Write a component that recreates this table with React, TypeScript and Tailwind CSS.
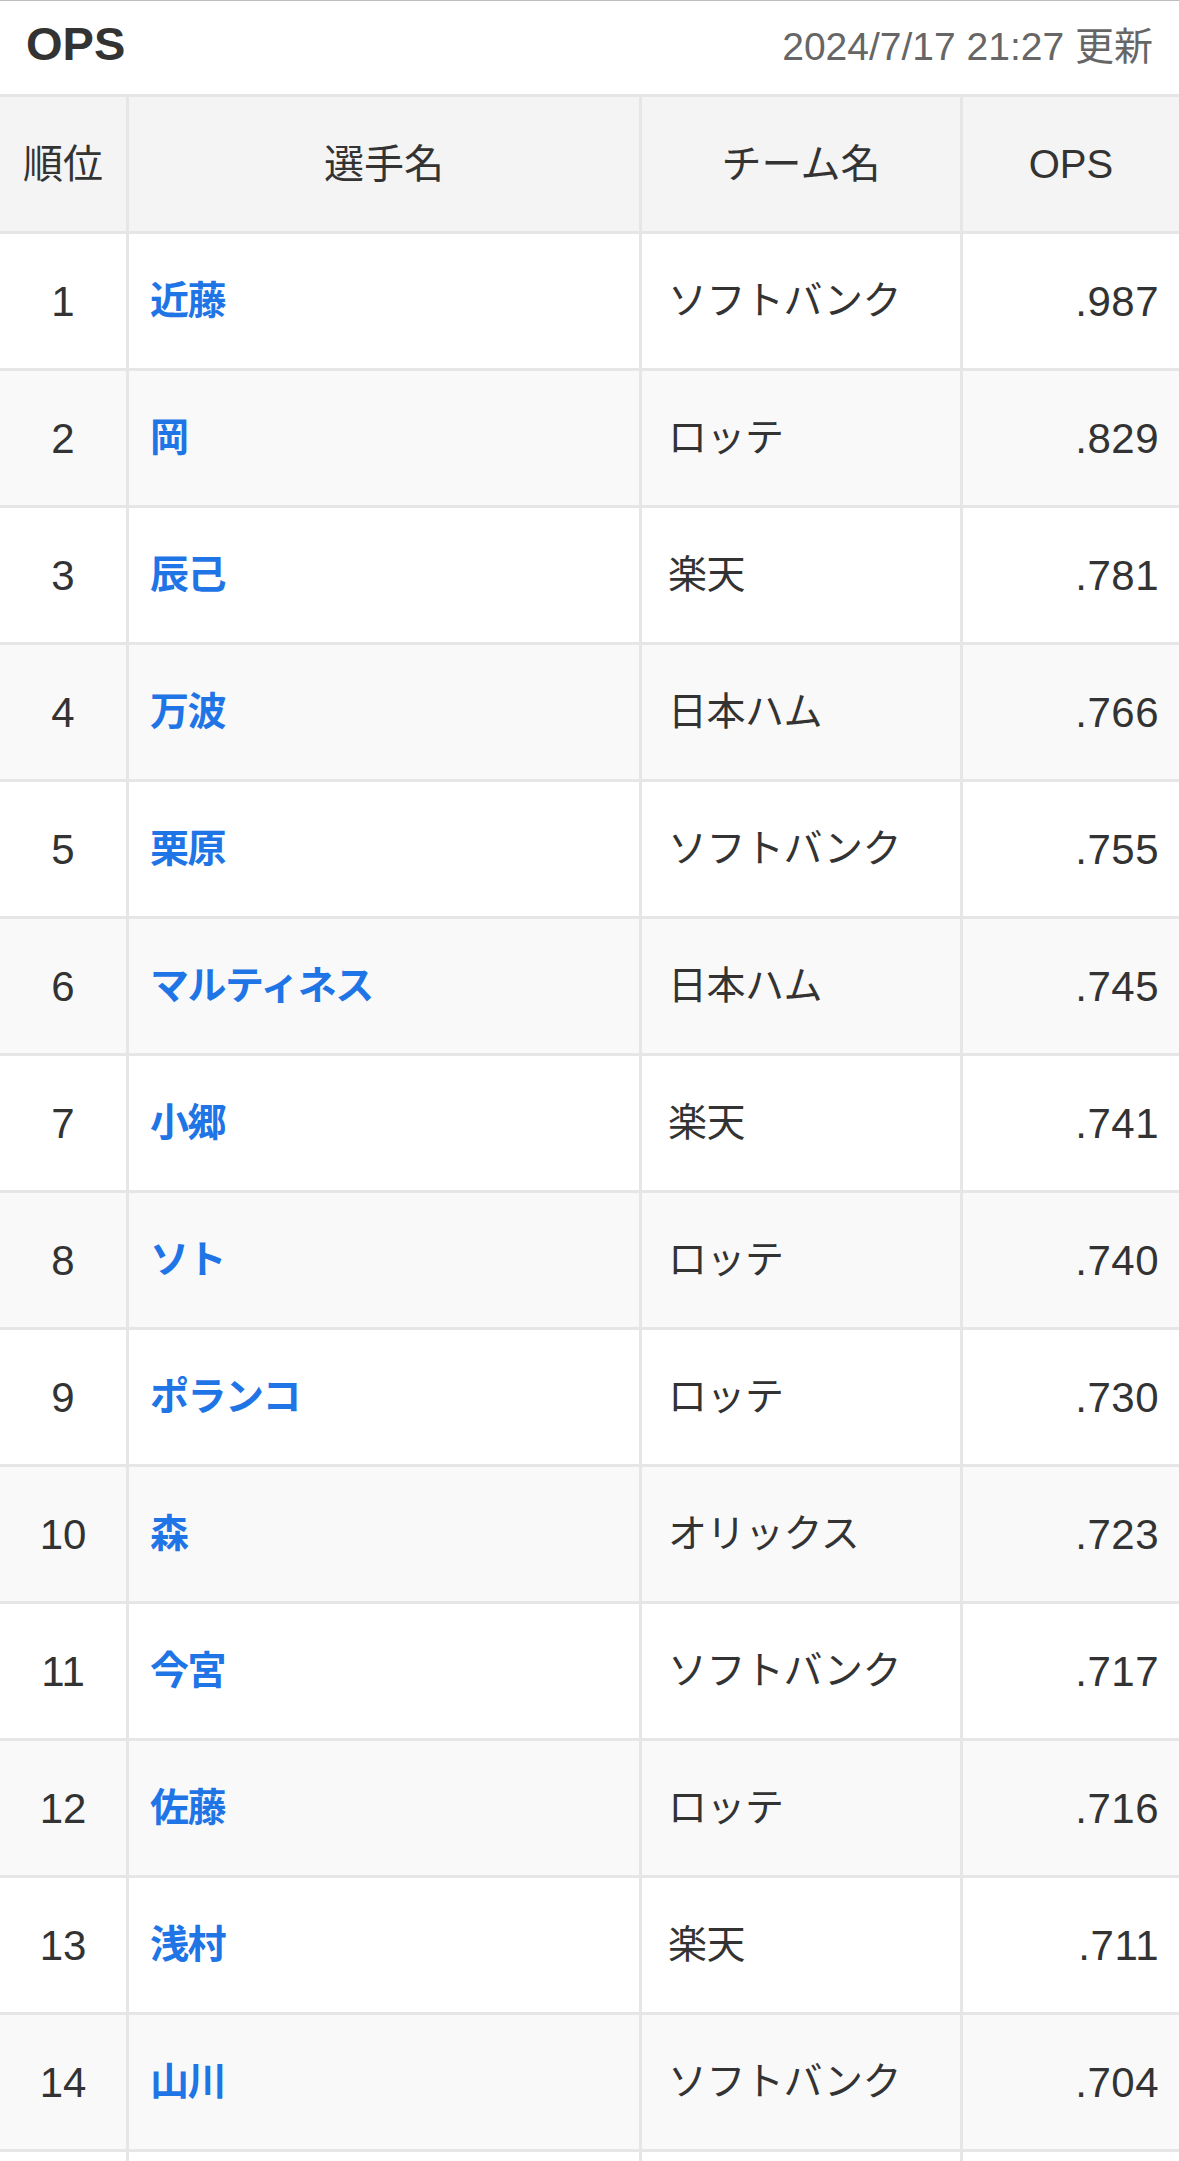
import React from "react";

type Row = { rank: number; name: string; team: string; ops: string };

const rows: Row[] = [
  { rank: 1, name: "近藤", team: "ソフトバンク", ops: ".987" },
  { rank: 2, name: "岡", team: "ロッテ", ops: ".829" },
  { rank: 3, name: "辰己", team: "楽天", ops: ".781" },
  { rank: 4, name: "万波", team: "日本ハム", ops: ".766" },
  { rank: 5, name: "栗原", team: "ソフトバンク", ops: ".755" },
  { rank: 6, name: "マルティネス", team: "日本ハム", ops: ".745" },
  { rank: 7, name: "小郷", team: "楽天", ops: ".741" },
  { rank: 8, name: "ソト", team: "ロッテ", ops: ".740" },
  { rank: 9, name: "ポランコ", team: "ロッテ", ops: ".730" },
  { rank: 10, name: "森", team: "オリックス", ops: ".723" },
  { rank: 11, name: "今宮", team: "ソフトバンク", ops: ".717" },
  { rank: 12, name: "佐藤", team: "ロッテ", ops: ".716" },
  { rank: 13, name: "浅村", team: "楽天", ops: ".711" },
  { rank: 14, name: "山川", team: "ソフトバンク", ops: ".704" },
];

const font = {
  fontFamily:
    '"Liberation Sans", "Noto Sans CJK JP", "Noto Sans", sans-serif',
};

export default function App() {
  return (
    <div className="w-[1179px] bg-white text-[#333333]" style={font}>
      <div className="border-t border-[#bdbdbd] h-[94px] flex items-baseline justify-between px-[26px] pt-[18px]">
        <div className="text-[47px] leading-[50px] font-bold text-[#333333]">OPS</div>
        <div className="text-[39px] leading-[39px] text-[#666666]">2024/7/17 21:27 更新</div>
      </div>
      <div className="border-t-[3px] border-[#e6e6e6]">
        <div className="grid grid-cols-[126px_513px_321px_1fr] h-[137px] bg-[#f4f4f4] border-b-[3px] border-[#e6e6e6] text-[40px]">
          <div className="flex items-center justify-center">順位</div>
          <div className="flex items-center justify-center border-l-[3px] border-[#e6e6e6]">選手名</div>
          <div className="flex items-center justify-center border-l-[3px] border-[#e6e6e6]">チーム名</div>
          <div className="flex items-center justify-center border-l-[3px] border-[#e6e6e6]">OPS</div>
        </div>
        {rows.map((r, i) => (
          <div
            key={r.rank}
            className={`grid grid-cols-[126px_513px_321px_1fr] h-[137px] border-b-[3px] border-[#e6e6e6] ${
              i % 2 === 1 ? "bg-[#f9f9f9]" : "bg-white"
            }`}
          >
            <div className="flex items-center justify-center text-[42px]">{r.rank}</div>
            <div className="flex items-center pl-[21px] border-l-[3px] border-[#e6e6e6] text-[39px] tracking-[-1.5px] font-bold text-[#1f75e6]">
              {r.name}
            </div>
            <div className="flex items-center pl-[26px] border-l-[3px] border-[#e6e6e6] text-[39px] tracking-[-0.5px]">
              {r.team}
            </div>
            <div className="flex items-center justify-end pr-[20px] border-l-[3px] border-[#e6e6e6] text-[42px] tracking-[0.5px]">
              {r.ops}
            </div>
          </div>
        ))}
        <div className="grid grid-cols-[126px_513px_321px_1fr] h-[137px] border-b-[3px] border-[#e6e6e6] bg-white">
          <div />
          <div className="border-l-[3px] border-[#e6e6e6]" />
          <div className="border-l-[3px] border-[#e6e6e6]" />
          <div className="border-l-[3px] border-[#e6e6e6]" />
        </div>
      </div>
    </div>
  );
}
